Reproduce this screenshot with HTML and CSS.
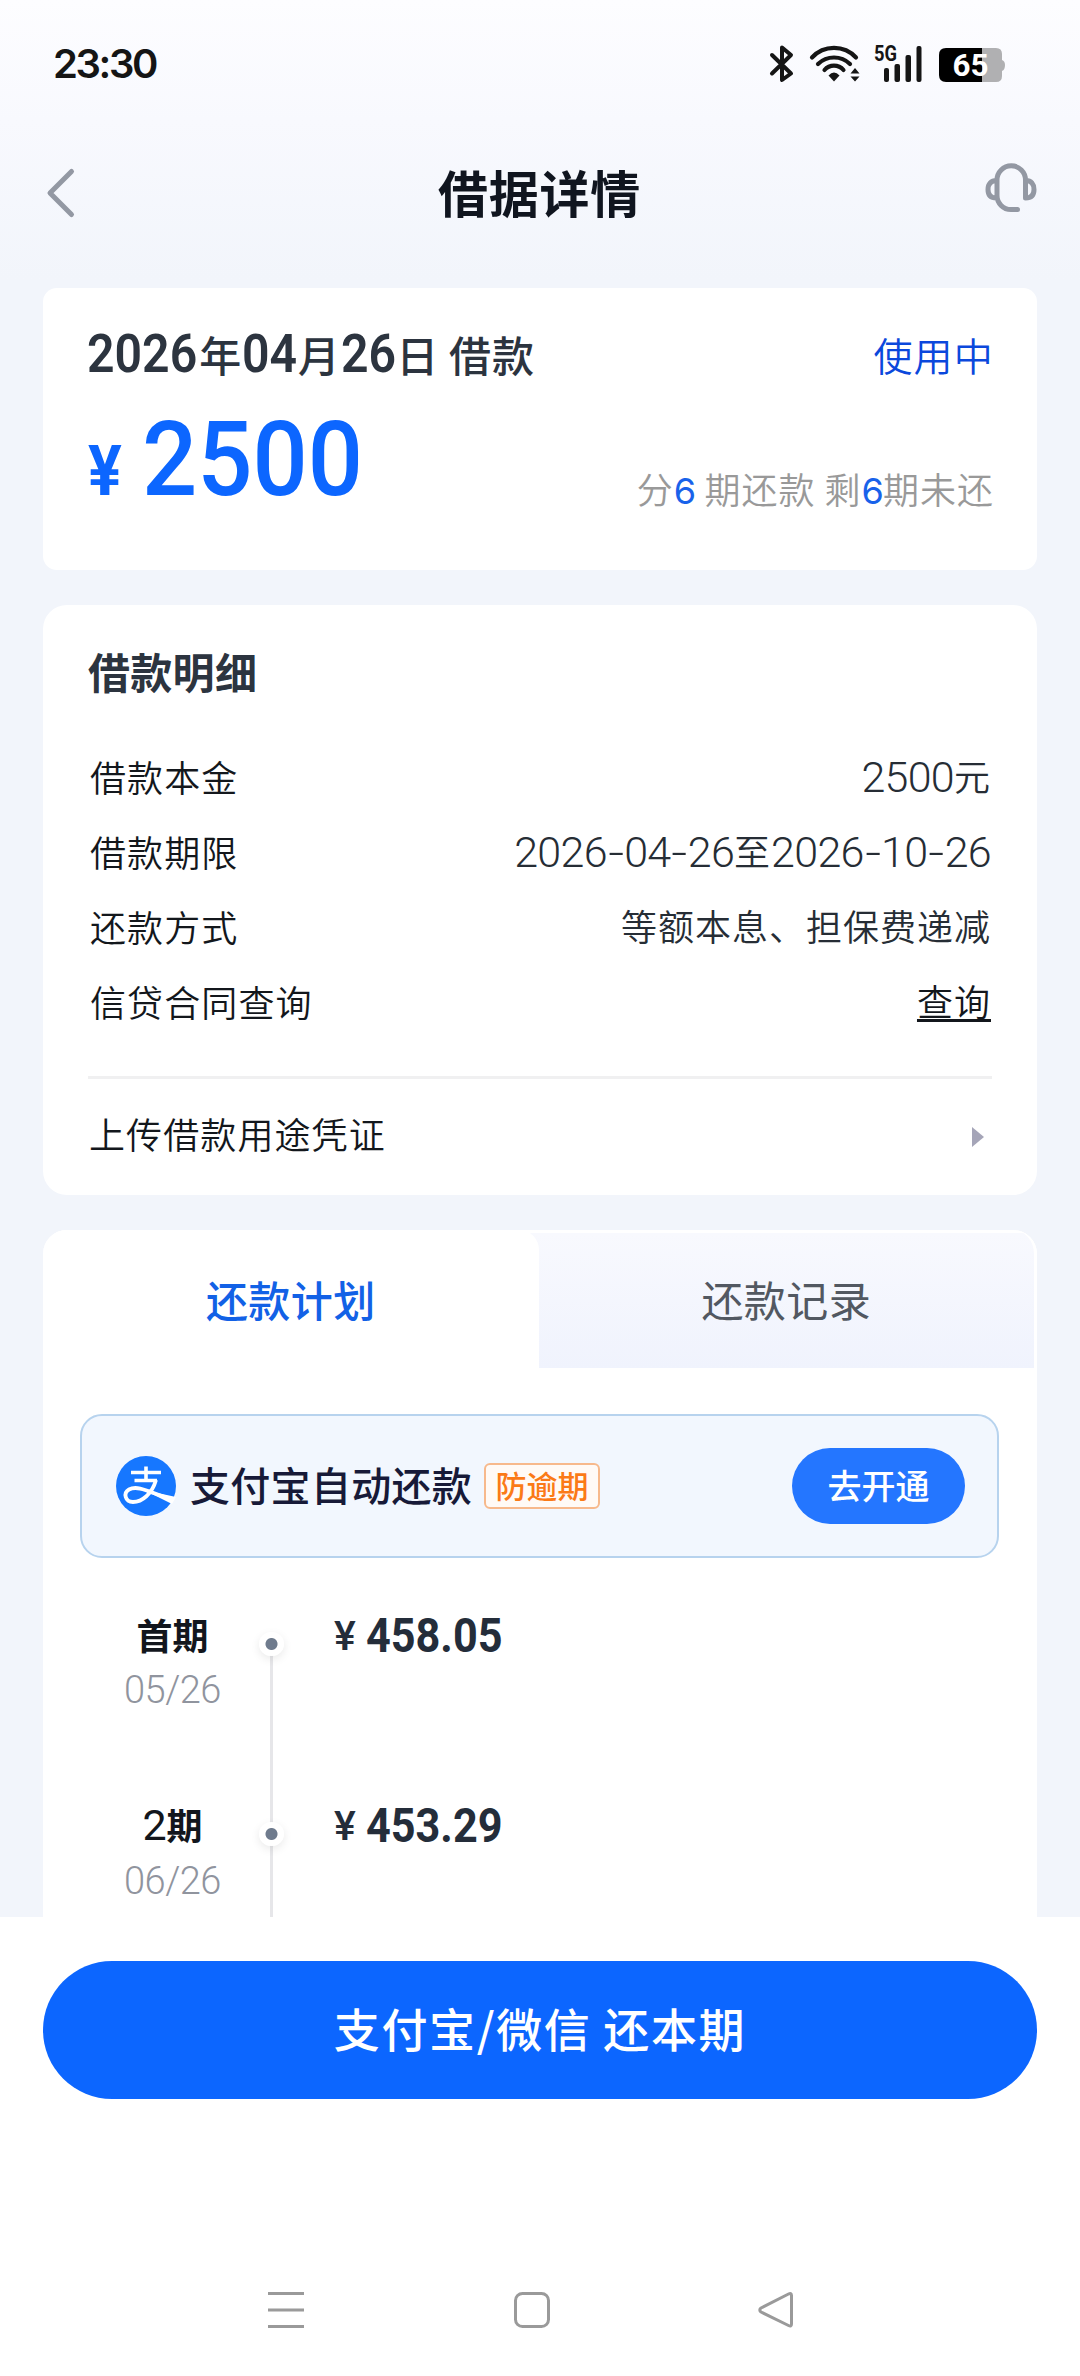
FILE: index.html
```html
<!DOCTYPE html>
<html lang="zh-CN">
<head>
<meta charset="utf-8">
<title>借据详情</title>
<link rel="stylesheet" href="styles.css">
</head>
<body>
<div class="screen">
  <div class="scroll">
    <div class="status">
      <span class="clock">23:30</span>
      <svg class="status-icons" width="240" height="50" viewBox="766 40 240 50" fill="none" stroke="#151515" stroke-width="4" stroke-linecap="round" stroke-linejoin="round">
        <path d="M772 55 L791 73.500 L782 80 V47.500 L791 55 L772 73.500"/>
        <path d="M812 57.500 A30 30 0 0 1 856 57.500 M818 64 A23 23 0 0 1 850 64 M824.500 70 A12.500 12.500 0 0 1 843.500 70" stroke-width="4.200"/>
        <path d="M828.500 75.500 Q834 69.500 839.500 75.500 L834 81.500 Z" fill="#151515" stroke="none"/>
        <path d="M850.500 73.500 L855 68 L859.500 73.500 Z M850.500 76.500 L855 81.500 L859.500 76.500 Z" fill="#151515" stroke="none"/>
        <g fill="#151515" stroke="none">
          <rect x="884" y="68" width="5" height="14" rx="2"/>
          <rect x="894.500" y="64" width="5.500" height="18" rx="2"/>
          <rect x="905.500" y="55" width="5.500" height="27" rx="2"/>
          <rect x="916.500" y="46" width="5" height="36" rx="2"/>
          <text class="net" x="874" y="60.500" textLength="23" lengthAdjust="spacingAndGlyphs">5G</text>
          <path d="M982 48 H996 Q1002 48 1002 54 V60 Q1005 61 1005 65 Q1005 70 1002 71 V76 Q1002 82 996 82 H982 Z" fill="#b0b0b2"/>
          <path d="M982 48 H946 Q939 48 939 55 V75 Q939 82 946 82 H982 Z" fill="#000"/>
          <text class="batt" x="952.500" y="76" textLength="36" lengthAdjust="spacingAndGlyphs">65</text>
        </g>
      </svg>
    </div>
    <div class="navbar">
      <svg width="40" height="56" viewBox="40 165 40 56" fill="none" stroke="#9398a3" stroke-width="5" stroke-linecap="round" stroke-linejoin="round"><path d="M71.500 171.500 L50 193 L71.500 214.500"/></svg>
      <h1 class="title">借据详情</h1>
      <svg width="58" height="56" viewBox="982 160 58 56" fill="none" stroke="#9398a3" stroke-width="5" stroke-linecap="round" stroke-linejoin="round"><path d="M1017.500 209.500 H1011 A14 14 0 0 1 997 195.500 V180 A14 14 0 0 1 1025.500 180 V198 C1031 198 1034 195 1034 189.500 C1034 184 1031 180.500 1026 180.500 M996.500 180.500 C991 180.500 988 184 988 189.500 C988 195 991 198 996.500 198"/></svg>
    </div>

    <section class="card summary">
      <div class="summary-main">
        <h2 class="date"><b class="year">2026</b>年<b>04</b>月<b>26</b>日<i></i>借款</h2>
        <div class="amount"><span class="yen">¥</span><span class="big">2500</span></div>
      </div>
      <div class="summary-side">
        <span class="state">使用中</span>
        <span class="periods">分<em>6</em>&nbsp;期还款&nbsp;剩<em>6</em>期未还</span>
      </div>
    </section>

    <section class="card detail">
      <h2 class="heading">借款明细</h2>
      <div class="row"><span>借款本金</span><span class="val"><b>2500</b>元</span></div>
      <div class="row"><span>借款期限</span><span class="val"><b>2026<i>-</i>04<i>-</i>26</b>至<b>2026<i>-</i>10<i>-</i>26</b></span></div>
      <div class="row"><span>还款方式</span><span class="val">等额本息、担保费递减</span></div>
      <div class="row"><span>信贷合同查询</span><a class="link">查询</a></div>
      <div class="row upload"><span>上传借款用途凭证</span>
        <svg class="caret" width="12" height="20" viewBox="0 0 12 20"><path d="M0 0 L12 10 L0 20 Z" fill="#a5a5b8"/></svg>
      </div>
    </section>

    <section class="card plan">
      <div class="tabs">
        <span class="tab active">还款计划</span>
        <span class="tab">还款记录</span>
      </div>
      <div class="banner">
        <svg width="60" height="60" viewBox="0 0 60 60">
          <circle cx="30" cy="30" r="30" fill="#1677ff"/>
          <g fill="none" stroke="#fff" stroke-width="3.600" stroke-linecap="butt">
            <path d="M15 16.500 H45 M30 10.500 V24 M18.500 24.500 H41"/>
            <path d="M40 24 C36 38 26 46 17 46 C9 46 7 37 13 33.500 C23 28 38 39 57 43.500" stroke-width="3.800"/>
          </g>
          <path d="M37 36 L60 41 L56 48 L36 38 Z" fill="#fff"/>
        </svg>
        <span class="banner-text">支付宝自动还款</span>
        <span class="tag">防逾期</span>
        <span class="go">去开通</span>
      </div>
      <div class="timeline">
        <div class="item">
          <div class="when"><strong>首期</strong><span>05/26</span></div>
          <div class="rail first"><span class="dot"></span></div>
          <div class="sum"><span>¥</span><b>458.05</b></div>
        </div>
        <div class="item">
          <div class="when"><strong><u>2</u>期</strong><span>06/26</span></div>
          <div class="rail"><span class="dot"></span></div>
          <div class="sum"><span>¥</span><b>453.29</b></div>
        </div>
      </div>
    </section>
  </div>
  <div class="footer">
    <button class="pay">支付宝/微信 还本期</button>
    <div class="sysnav">
      <svg width="36" height="36" viewBox="0 0 36 36" stroke="#9a9a9a" stroke-width="3"><path d="M0 1.500 H36 M0 18 H36 M0 34.500 H36"/></svg>
      <svg width="36" height="36" viewBox="0 0 36 36" fill="none" stroke="#9a9a9a" stroke-width="3"><rect x="1.500" y="1.500" width="33" height="33" rx="7"/></svg>
      <svg width="36" height="36" viewBox="0 0 36 36" fill="none" stroke="#9a9a9a" stroke-width="3" stroke-linejoin="round"><path d="M33.500 3.500 V32 Q33.500 35 30.500 33.500 L3 20 Q0.500 18 3 16 L30.500 2 Q33.500 0.500 33.500 3.500 Z"/></svg>
    </div>
  </div>
</div>
</body>
</html>
```
FILE: styles.css
```css
* { box-sizing: border-box; margin: 0; padding: 0; }
body { width: 1080px; background: #fff; font-family: "Noto Sans CJK SC", sans-serif; }
svg { display: block; }
.screen { width: 1080px; height: 2376px; display: flex; flex-direction: column; overflow: hidden; }
.scroll { height: 1917px; overflow: hidden; padding: 0 43px; background: linear-gradient(#fdfdff 0, #f8f9fe 120px, #f2f5fb 280px); }

.status { height: 130px; padding: 40px 31px 0 10px; display: flex; justify-content: space-between; }
.clock { font: 600 40px/48px Inter, sans-serif; letter-spacing: -2.400px; color: #151515; }
.net { font: 700 22px Roboto, sans-serif; }
.batt { font: 700 32px Roboto, sans-serif; fill: #fff; }

.navbar { height: 158px; display: flex; justify-content: space-between; align-items: flex-start; }
.navbar svg:first-child { margin: 35px 0 0 -3px; }
.navbar svg:last-child { margin: 30px -3px 0 0; }
.title { font-size: 50px; line-height: 60px; letter-spacing: 0.800px; font-weight: 700; color: #10151f; margin: 31px 0 0 17px; }

.card { background: #fff; }
.summary { height: 282px; border-radius: 14px; padding: 0 45px; display: flex; justify-content: space-between; }
.date { display: flex; margin-top: 36px; height: 60px; line-height: 60px; font-size: 42px; letter-spacing: 0.800px; font-weight: 500; color: #2c343f; }
.date b { font-family: Roboto, sans-serif; font-weight: 600; font-size: 53px; letter-spacing: 0; transform: scaleX(.91); transform-origin: left; margin-right: -4.800px; }
.date .year { margin-left: -1px; margin-right: -9px; }
.date i { width: 10px; }
.amount { display: flex; align-items: baseline; color: #0c66ff; font-family: Roboto, sans-serif; height: 120px; line-height: 120px; margin-top: 16px; }
.yen { font-size: 70px; font-weight: 700; width: 54px; transform: scaleX(.9); transform-origin: left; }
.big { font-size: 104px; font-weight: 500; transform: scaleX(.935); transform-origin: left; }
.summary-side { display: flex; flex-direction: column; align-items: flex-end; margin-right: -2px; }
.state { font-size: 39px; line-height: 50px; letter-spacing: 1.200px; margin: 41px 0 0; color: #0b48dc; font-weight: 350; }
.periods { margin-top: 84px; font-size: 36px; line-height: 50px; letter-spacing: 1px; color: #999; font-weight: 350; }
.periods em { font: 400 36px/50px Inter, sans-serif; color: #1862ea; letter-spacing: -0.800px; }

.detail { margin-top: 35px; height: 590px; border-radius: 24px; padding: 38px 45px 0; }
.heading { font-size: 42px; line-height: 56px; letter-spacing: 0.300px; font-weight: 700; color: #2c343f; margin-bottom: 40px; }
.row { display: flex; justify-content: space-between; height: 75px; line-height: 75px; padding: 0 2px; font-size: 36px; letter-spacing: 1.100px; color: #13171c; font-weight: 350; }
.val { display: flex; letter-spacing: 1px; color: #262d35; margin: -1px -1px 0 0; }
.val b { font: 300 43px/78px Roboto, sans-serif; letter-spacing: -0.700px; }
.val i { display: inline-block; font-style: normal; letter-spacing: 0; margin: 0 2px 0 3px; transform: scaleX(1.300); }
.link { text-decoration: underline; text-decoration-thickness: 3px; text-underline-offset: 3px; letter-spacing: 1px; margin: -1px -1px 0 0; }
.upload { margin: 37px 0 0; border-top: 3px solid #f0f0f1; height: 116px; line-height: 109px; align-items: flex-start; padding: 0 2px 0 1px; }
.caret { margin: 48px 6px 0 0; }

.plan { margin-top: 35px; height: 720px; border-radius: 24px 24px 0 0; }
.tabs { display: flex; height: 138px; padding-top: 3px; background: linear-gradient(#fff 3px, #f8f9fe 3px, #f0f3fd); border-right: 3px solid #fff; border-radius: 24px 24px 0 0; }
.tab { flex: 1 1 0; height: 135px; line-height: 132px; text-align: center; font-size: 42px; letter-spacing: 0.400px; color: #525861; }
.tab.active { color: #1261e6; font-weight: 450; background: #fff; margin-top: -3px; height: 138px; line-height: 138px; border-radius: 24px 20px 0 0; }
.banner { margin: 46px 38px 0 37px; height: 144px; border: 2px solid #b7d3ee; border-radius: 22px; background: #f2f7fe; padding: 0 32px 0 34px; display: flex; align-items: center; }
.banner-text { margin: -4px 0 0 14px; font-size: 40px; letter-spacing: 0.300px; line-height: 60px; font-weight: 500; color: #171a38; }
.tag { margin-left: 12px; width: 116px; height: 46px; border: 2px solid #f7b98c; border-radius: 6px; background: #fffaf6; color: #fb7a17; font-size: 31px; line-height: 40px; font-weight: 500; text-align: center; }
.go { margin-left: auto; width: 173px; height: 76px; border-radius: 38px; background: #2476ff; color: #fff; text-align: center; font-size: 34px; line-height: 73px; font-weight: 500; }

.timeline { margin-top: 50px; }
.item { display: grid; grid-template-columns: 129px 26px 1fr; padding-left: 65px; height: 190px; }
.when { width: 129px; text-align: center; display: flex; flex-direction: column; }
.when strong { font-size: 36px; line-height: 52px; font-weight: 700; color: #12161d; }
.when u { text-decoration: none; font: 400 43px/52px Roboto, sans-serif; }
.when span { font: 300 38px/50px Roboto, sans-serif; letter-spacing: -0.500px; margin-top: 5px; color: #90949e; }
.rail { margin-left: 21px; width: 26px; background: linear-gradient(#e6e6e9, #e6e6e9) 12px 0 / 3px 190px no-repeat; padding: 24px 1px 0; }
.rail.first { background-position: 12px 36px; }
.dot { display: block; width: 25px; height: 24px; border-radius: 50%; background: radial-gradient(circle, #6f7b8d 5.500px, #fff 6.500px); box-shadow: 0 3px 10px rgba(0,0,0,.09); }
.sum { padding-left: 71px; display: flex; color: #242d3a; height: 52px; margin-top: 1px; }
.sum span { font: 500 41px/54px Roboto, sans-serif; width: 32px; }
.sum b { font: 700 48px/53px Roboto, sans-serif; transform: scaleX(.9); transform-origin: left; }

.footer { flex: 1; background: #fff; padding: 44px 43px 0; display: flex; flex-direction: column; }
.pay { height: 138px; border: 0; border-radius: 69px; background: #0c66ff; color: #fff; font: 500 46px/130px "Noto Sans CJK SC", sans-serif; letter-spacing: 1.600px; padding-bottom: 6px; }
.sysnav { display: flex; gap: 210px; margin: 193px 0 0 225px; }
.sysnav svg:last-child { margin-left: -2px; }
```
